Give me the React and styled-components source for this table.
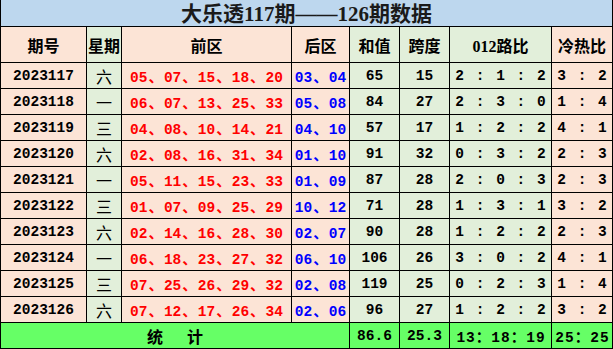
import React from "react";
import styled, { createGlobalStyle } from "styled-components";

const Global = createGlobalStyle`
  html, body { margin: 0; padding: 0; background: #fff; }
  body { font-family: "Noto Sans CJK SC", sans-serif; }
`;

const TONES = {
  title: "#BDD7EE",
  peach: "#FCE4D6",
  green: "#E2EFDA",
  lime: "#66FF66",
};

const COL_TONES = ["peach", "green", "peach", "peach", "green", "green", "green", "peach"];

const Sheet = styled.div`
  display: grid;
  grid-template-columns: 85px 34px 169px 57px 49px 49px 101px 60px;
  grid-template-rows: 26px 35px repeat(10, 25px) 25px;
  gap: 1px;
  width: 613px;
  box-sizing: border-box;
  padding: 0 1px 1px;
  background: #000;
`;

const Cell = styled.div`
  display: flex;
  align-items: center;
  justify-content: center;
  background: ${(p) => TONES[p.$tone]};
  white-space: nowrap;
  overflow: hidden;
  grid-column: ${(p) => (p.$span ? `span ${p.$span}` : "auto")};
`;

const TitleCell = styled(Cell)`
  grid-column: 1 / -1;
  overflow: visible;
  line-height: 1;
  padding-top: 3px;
  box-sizing: border-box;
  font-family: "Liberation Serif", "Noto Sans CJK SC", serif;
  font-weight: 700;
  font-size: 21px;
  color: #1a1a1a;
`;

const HeadText = styled.span`
  font-family: "Liberation Serif", "Noto Sans CJK SC", sans-serif;
  font-weight: 700;
  font-size: 16px;
  color: #000;
`;

const Num = styled.span`
  font-family: "Liberation Mono", "Noto Sans CJK SC", monospace;
  font-weight: 700;
  font-size: 14.5px;
  color: ${(p) => p.$color || "#000"};
  letter-spacing: ${(p) => p.$spacing || 0}px;
  margin-right: ${(p) => -(p.$spacing || 0)}px;
`;

const Sep = styled.span`
  font-family: "Noto Sans CJK SC", sans-serif;
  font-weight: 700;
  font-size: 14.5px;
  margin: 0 1px;
`;

const Week = styled.span`
  font-family: "Noto Sans CJK SC", sans-serif;
  font-weight: 400;
  font-size: 16px;
  color: #000;
`;

const SumLabel = styled.span`
  display: flex;
  gap: 24px;
  font-family: "Noto Sans CJK SC", sans-serif;
  font-weight: 700;
  font-size: 16px;
  color: #000;
`;

const rows = [
  ["2023117", "六", ["05", "07", "15", "18", "20"], ["03", "04"], "65", "15", "2 : 1 : 2", "3 : 2"],
  ["2023118", "一", ["06", "07", "13", "25", "33"], ["05", "08"], "84", "27", "2 : 3 : 0", "1 : 4"],
  ["2023119", "三", ["04", "08", "10", "14", "21"], ["04", "10"], "57", "17", "1 : 2 : 2", "4 : 1"],
  ["2023120", "六", ["02", "08", "16", "31", "34"], ["01", "10"], "91", "32", "0 : 3 : 2", "2 : 3"],
  ["2023121", "一", ["05", "11", "15", "23", "33"], ["01", "09"], "87", "28", "2 : 0 : 3", "2 : 3"],
  ["2023122", "三", ["01", "07", "09", "25", "29"], ["10", "12"], "71", "28", "1 : 3 : 1", "3 : 2"],
  ["2023123", "六", ["02", "14", "16", "28", "30"], ["02", "07"], "90", "28", "1 : 2 : 2", "2 : 3"],
  ["2023124", "一", ["06", "18", "23", "27", "32"], ["06", "10"], "106", "26", "3 : 0 : 2", "4 : 1"],
  ["2023125", "三", ["07", "25", "26", "29", "32"], ["02", "08"], "119", "25", "0 : 2 : 3", "1 : 4"],
  ["2023126", "六", ["07", "12", "17", "26", "34"], ["02", "06"], "96", "27", "1 : 2 : 2", "3 : 2"],
];

const headers = ["期号", "星期", "前区", "后区", "和值", "跨度", "012路比", "冷热比"];

function Balls({ list, color }) {
  return (
    <Num $color={color}>
      {list.map((n, i) => (
        <React.Fragment key={i}>
          {i > 0 && <Sep>、</Sep>}
          {n}
        </React.Fragment>
      ))}
    </Num>
  );
}

export default function App() {
  return (
    <>
      <Global />
      <Sheet>
        <TitleCell $tone="title">大乐透117期——126期数据</TitleCell>
        {headers.map((h, i) => (
          <Cell key={h} $tone={COL_TONES[i]}>
            <HeadText>{h}</HeadText>
          </Cell>
        ))}
        {rows.map((r) => (
          <React.Fragment key={r[0]}>
            <Cell $tone="peach"><Num>{r[0]}</Num></Cell>
            <Cell $tone="green"><Week>{r[1]}</Week></Cell>
            <Cell $tone="peach"><Balls list={r[2]} color="#FF0000" /></Cell>
            <Cell $tone="peach"><Balls list={r[3]} color="#0000FF" /></Cell>
            <Cell $tone="green"><Num>{r[4]}</Num></Cell>
            <Cell $tone="green"><Num>{r[5]}</Num></Cell>
            <Cell $tone="green"><Num $spacing={1.5}>{r[6]}</Num></Cell>
            <Cell $tone="peach"><Num $spacing={1.5}>{r[7]}</Num></Cell>
          </React.Fragment>
        ))}
        <Cell $tone="lime" $span={4}>
          <SumLabel><span>统</span><span>计</span></SumLabel>
        </Cell>
        <Cell $tone="lime"><Num>86.6</Num></Cell>
        <Cell $tone="lime"><Num>25.3</Num></Cell>
        <Cell $tone="lime"><Num $spacing={1}>13：18：19</Num></Cell>
        <Cell $tone="lime"><Num $spacing={1}>25：25</Num></Cell>
      </Sheet>
    </>
  );
}
